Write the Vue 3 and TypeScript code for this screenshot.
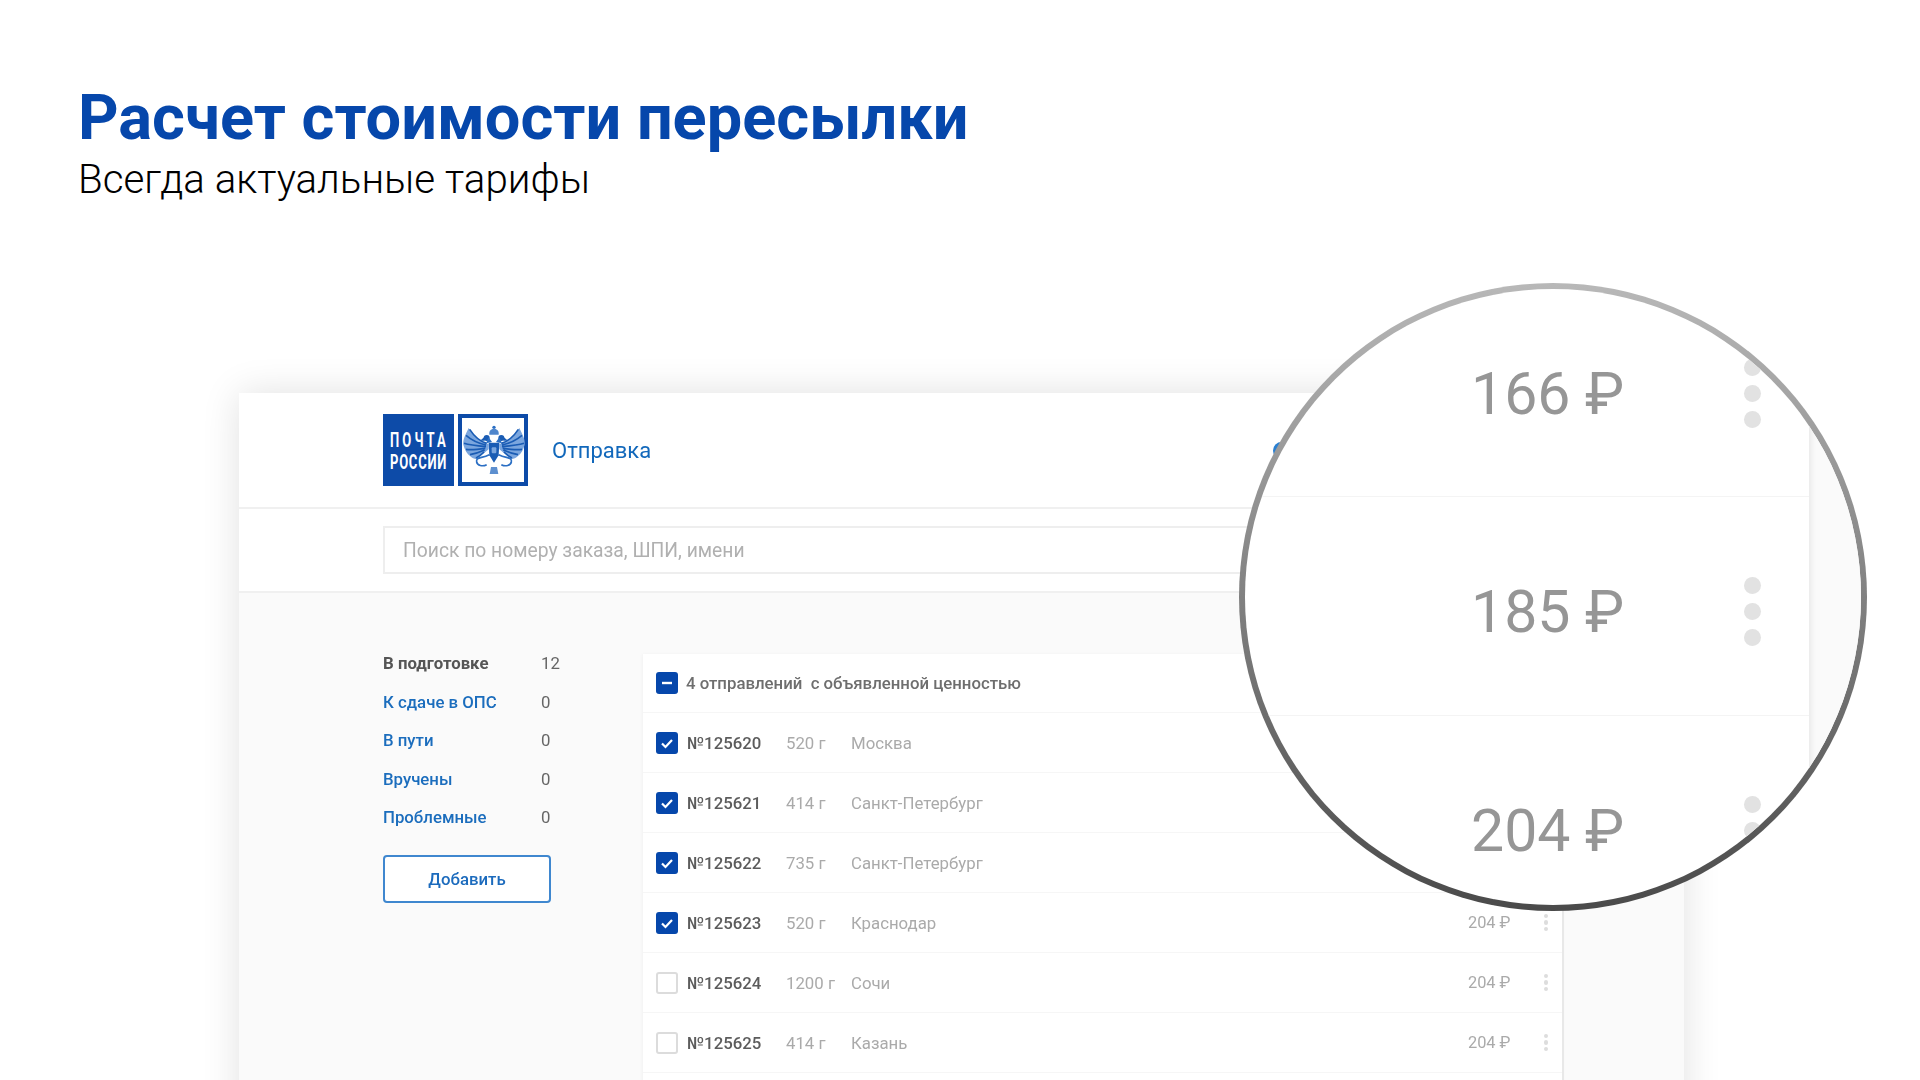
<template>
  <div class="page">
    <header class="intro">
      <h1>Расчет стоимости пересылки</h1>
      <p>Всегда актуальные тарифы</p>
    </header>

    <div class="mock">
      <div class="mock-top">
        <svg class="logo" width="146" height="72" viewBox="0 0 146 72">
          <rect x="0" y="0" width="71" height="72" fill="#0d4ba8" />
          <g transform="translate(7 33) scale(0.62 1)">
            <text class="logo-text" textLength="90" lengthAdjust="spacing">ПОЧТА</text>
          </g>
          <g transform="translate(7 55) scale(0.62 1)">
            <text class="logo-text" textLength="91" lengthAdjust="spacing">РОССИИ</text>
          </g>
          <rect x="77" y="2" width="66" height="68" fill="#fff" stroke="#0d4ba8" stroke-width="4" />
          <g transform="translate(111 -2) scale(0.3333)">
            <g>
              <path d="M16 96 C40 90 60 72 76 48 C86 68 94 84 92 98 C88 114 80 126 72 132 C66 138 60 140 52 142 C40 132 28 122 16 112 Z" fill="#7ba6de" />
              <path d="M22 94 C42 88 60 72 73 52 M24 99 C46 94 68 84 84 70 M24 104 C48 102 72 100 90 94 M26 109 C48 112 68 114 84 112 M28 114 C46 122 62 126 72 128 M30 120 C38 128 46 134 54 138" fill="none" stroke="#1a5cb4" stroke-width="5" />
              <path d="M14 128 C40 140 55 135 52 150 C50 160 35 165 22 158" fill="none" stroke="#2b6fc4" stroke-width="5" />
              <circle cx="22" cy="78" r="9" fill="#1a5cb4" />
              <path d="M28 74 L42 86 L28 86 Z" fill="#1a5cb4" />
              <path d="M6 90 L16 76 L24 94 Z" fill="#2b6fc4" />
            </g>
            <g transform="scale(-1 1)">
              <path d="M16 96 C40 90 60 72 76 48 C86 68 94 84 92 98 C88 114 80 126 72 132 C66 138 60 140 52 142 C40 132 28 122 16 112 Z" fill="#7ba6de" />
              <path d="M22 94 C42 88 60 72 73 52 M24 99 C46 94 68 84 84 70 M24 104 C48 102 72 100 90 94 M26 109 C48 112 68 114 84 112 M28 114 C46 122 62 126 72 128 M30 120 C38 128 46 134 54 138" fill="none" stroke="#1a5cb4" stroke-width="5" />
              <path d="M14 128 C40 140 55 135 52 150 C50 160 35 165 22 158" fill="none" stroke="#2b6fc4" stroke-width="5" />
              <circle cx="22" cy="78" r="9" fill="#1a5cb4" />
              <path d="M28 74 L42 86 L28 86 Z" fill="#1a5cb4" />
              <path d="M6 90 L16 76 L24 94 Z" fill="#2b6fc4" />
            </g>
            <circle cx="0" cy="46" r="5" fill="#2b6fc4" />
            <path d="M-14 68 C-16 54 -6 50 0 50 C6 50 16 54 14 68 Z" fill="#4f86cc" />
            <path d="M-16 92 L16 92 L14 130 L0 152 L-14 130 Z" fill="#1a5cb4" />
            <rect x="-7" y="106" width="14" height="18" rx="3" fill="#7ba6de" />
            <path d="M-9 165 L9 165 L13 186 L-13 186 Z" fill="#5d8fcf" />
          </g>
        </svg>
        <a class="top-link">Отправка</a>
        <span class="top-dot"></span>
      </div>

      <div class="mock-search">
        <div class="search-box">Поиск по номеру заказа, ШПИ, имени</div>
      </div>

      <div class="mock-body">
        <aside class="side">
          <div v-for="s in statuses" :key="s.label" class="side-row" :class="{ active: s.active }">
            <span class="side-label">{{ s.label }}</span>
            <span class="side-count">{{ s.count }}</span>
          </div>
          <button class="add-btn">Добавить</button>
        </aside>

        <section class="list">
          <div class="list-head">
            <span class="box on">
              <svg width="22" height="22" viewBox="0 0 22 22"><path d="M6 11h10" stroke="#fff" stroke-width="2.4" /></svg>
            </span>
            <span class="head-text">4 отправлений&nbsp; с объявленной ценностью</span>
          </div>
          <div v-for="o in orders" :key="o.num" class="list-row">
            <span class="box" :class="{ on: o.checked }">
              <svg v-if="o.checked" width="22" height="22" viewBox="0 0 22 22"><path d="M6 11.5l3.5 3.5L16 8" fill="none" stroke="#fff" stroke-width="2.2" /></svg>
            </span>
            <span class="num">№{{ o.num }}</span>
            <span class="weight">{{ o.weight }} г</span>
            <span class="city">{{ o.city }}</span>
            <!-- цены первых трёх строк видны только в лупе -->
            <span v-if="o.price" class="price">{{ o.price }} ₽</span>
            <span class="kebab"><i></i><i></i><i></i></span>
          </div>
        </section>
      </div>
    </div>

    <div class="lens">
      <div class="lens-inner">
        <div class="lens-rows">
          <div v-for="p in lensPrices" :key="p" class="lens-row">
            <span class="lens-price">{{ p }} ₽</span>
            <span class="lens-kebab"><i></i><i></i><i></i></span>
          </div>
        </div>
        <div class="lens-side"></div>
      </div>
    </div>
  </div>
</template>

<script setup lang="ts">
interface Status {
  label: string;
  count: number;
  active?: boolean;
}

interface Order {
  num: number;
  weight: number;
  city: string;
  price?: number;
  checked: boolean;
}

const statuses: Status[] = [
  { label: 'В подготовке', count: 12, active: true },
  { label: 'К сдаче в ОПС', count: 0 },
  { label: 'В пути', count: 0 },
  { label: 'Вручены', count: 0 },
  { label: 'Проблемные', count: 0 },
];

const orders: Order[] = [
  { num: 125620, weight: 520, city: 'Москва', checked: true },
  { num: 125621, weight: 414, city: 'Санкт-Петербург', checked: true },
  { num: 125622, weight: 735, city: 'Санкт-Петербург', checked: true },
  { num: 125623, weight: 520, city: 'Краснодар', price: 204, checked: true },
  { num: 125624, weight: 1200, city: 'Сочи', price: 204, checked: false },
  { num: 125625, weight: 414, city: 'Казань', price: 204, checked: false },
];

const lensPrices = [166, 185, 204];
</script>

<style>
html,
body {
  margin: 0;
  background: #fff;
}
</style>

<style scoped>
.page {
  position: relative;
  width: 1920px;
  height: 1080px;
  overflow: hidden;
  background: #fff;
  font-family: Roboto, "Noto Sans", sans-serif;
}

.intro {
  padding: 79px 0 0 78px;
}

.intro h1 {
  margin: 0 0 1px;
  font-size: 63.1px;
  line-height: 76px;
  font-weight: 700;
  color: #0647ab;
}

.intro p {
  margin: 0;
  font-size: 40.3px;
  line-height: 48px;
  font-weight: 300;
  color: #000;
}

.mock {
  display: flex;
  flex-direction: column;
  width: 1445px;
  height: 760px;
  margin: 189px 0 0 239px;
  background: #fafafa;
  box-shadow: 0 0 36px rgba(0, 0, 0, 0.12);
  filter: blur(0.6px);
}

.mock-top {
  display: flex;
  align-items: center;
  flex-shrink: 0;
  height: 114px;
  padding-left: 144px;
  background: #fff;
  border-bottom: 2px solid #f0f0f0;
}

.logo {
  display: block;
}

.logo-text {
  font-family: Roboto, sans-serif;
  font-size: 21px;
  font-weight: 700;
  fill: #fff;
}

.top-link {
  margin-left: 23px;
  font-size: 22px;
  color: #1268bb;
}

.top-dot {
  width: 17px;
  height: 17px;
  margin-left: auto;
  margin-right: 394px;
  border-radius: 50%;
  background: #2a7fd0;
}

.mock-search {
  flex-shrink: 0;
  height: 65px;
  padding: 17px 122px 0 144px;
  background: #fff;
  border-bottom: 2px solid #f0f0f0;
}

.search-box {
  height: 48px;
  padding-left: 18px;
  line-height: 45px;
  box-sizing: border-box;
  border: 2px solid #eee;
  font-size: 19.3px;
  color: #b0b0b0;
}

.mock-body {
  display: flex;
  flex: 1;
  padding-left: 144px;
}

.side {
  width: 260px;
  padding-top: 51px;
  flex-shrink: 0;
}

.side-row {
  display: flex;
  height: 38.6px;
  line-height: 38.6px;
  font-size: 16.8px;
  font-weight: 500;
  color: #1b6dbd;
}

.side-row.active .side-label {
  font-weight: 700;
  color: #555;
}

.side-label {
  width: 158px;
}

.side-count {
  font-weight: 400;
  color: #666;
}

.add-btn {
  display: block;
  width: 168px;
  height: 48px;
  margin-top: 18px;
  background: #fff;
  border: 2px solid #3f87cf;
  border-radius: 4px;
  font-family: inherit;
  font-size: 16.8px;
  font-weight: 500;
  color: #1c6bbd;
}

.list {
  width: 919px;
  margin-top: 61px;
  background: #fff;
  border-right: 2px solid #e8e8e8;
  box-shadow: -1px 0 3px rgba(0, 0, 0, 0.03);
}

.list-head,
.list-row {
  display: flex;
  align-items: center;
  padding-left: 13px;
  border-bottom: 1px solid #f6f6f6;
  font-size: 16.8px;
}

.list-head {
  height: 58px;
}

.list-row {
  height: 59px;
}

.list-row:first-of-type {
  padding-top: 2px;
}

.box {
  flex-shrink: 0;
  width: 22px;
  height: 22px;
  box-sizing: border-box;
  border: 2px solid #dcdcdc;
  border-radius: 3px;
  background: #fff;
}

.box.on {
  border: 0;
  background: #0647ab;
}

.box svg {
  display: block;
}

.head-text {
  margin-left: 8px;
  font-weight: 500;
  color: #6e6e6e;
}

.num {
  width: 99px;
  margin-left: 9px;
  font-weight: 500;
  color: #5c5c5c;
}

.weight {
  width: 65px;
  color: #aaa;
  white-space: nowrap;
}

.city {
  color: #aaa;
}

.price {
  margin-left: auto;
  font-size: 16.4px;
  color: #aaa;
}

.kebab {
  display: flex;
  flex-direction: column;
  gap: 2px;
  margin: 0 14px 0 33px;
}

.price + .kebab {
  margin-left: 33px;
}

.city + .kebab {
  margin-left: auto;
}

.kebab i {
  display: block;
  width: 4.5px;
  height: 4.5px;
  border-radius: 50%;
  background: #ddd;
}

/* лупа поверх макета */
.lens {
  position: absolute;
  left: 1239px;
  top: 283px;
  width: 628px;
  height: 628px;
  padding: 6px;
  box-sizing: border-box;
  border-radius: 50%;
  background: linear-gradient(#b8b8b8, #4a4a4a);
}

.lens-inner {
  display: flex;
  width: 100%;
  height: 100%;
  overflow: hidden;
  border-radius: 50%;
  background: #fff;
}

.lens-rows {
  width: 564px;
  flex-shrink: 0;
}

.lens-row {
  display: flex;
  align-items: center;
  box-sizing: border-box;
  border-bottom: 1px solid #f4f4f4;
}

.lens-row:nth-child(1) {
  height: 208px;
  padding-top: 1px;
}

.lens-row:nth-child(2) {
  height: 219px;
  padding-top: 11px;
}

.lens-row:nth-child(3) {
  height: 218px;
  padding-top: 10px;
  border-bottom: 0;
}

.lens-price {
  width: 273px;
  margin-left: 226px;
  font-size: 59px;
  color: #969696;
  filter: blur(0.6px);
}

.lens-kebab {
  display: flex;
  flex-direction: column;
  gap: 9px;
}

.lens-kebab i {
  display: block;
  width: 17px;
  height: 17px;
  border-radius: 50%;
  background: #e2e2e2;
}

.lens-side {
  flex: 1;
  background: #fafafa;
  box-shadow: inset 6px 0 6px -4px rgba(0, 0, 0, 0.08);
}
</style>
